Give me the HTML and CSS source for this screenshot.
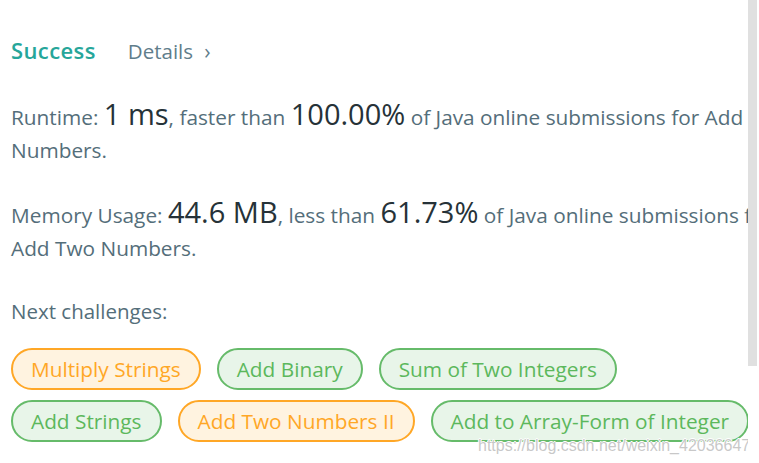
FILE: index.html
```html
<!DOCTYPE html>
<html>
<head>
<meta charset="utf-8">
<link rel="stylesheet" href="styles.css">
</head>
<body>
<div class="page">
  <div class="viewport">
    <div class="content">
      <div class="header">
        <span class="success">Success</span>
        <span class="details">Details <span class="chev">›</span></span>
      </div>
      <p class="stat">Runtime: <span class="big">1 ms</span>, faster than <span class="big">100.00%</span> of Java online submissions for Add Two Numbers.</p>
      <p class="stat">Memory Usage: <span class="big">44.6 MB</span>, less than <span class="big">61.73%</span> of Java online submissions for Add Two Numbers.</p>
      <p class="next">Next challenges:</p>
      <div class="chips">
        <span class="chip medium">Multiply Strings</span>
        <span class="chip easy">Add Binary</span>
        <span class="chip easy">Sum of Two Integers</span>
        <span class="chip easy">Add Strings</span>
        <span class="chip medium">Add Two Numbers II</span>
        <span class="chip easy">Add to Array-Form of Integer</span>
      </div>
    </div>
    <div class="watermark">https://blog.csdn.net/weixin_42036647</div>
  </div>
  <div class="scrolltrack"><div class="thumb"></div></div>
</div>
</body>
</html>
```

FILE: styles.css
```css
html, body {
  margin: 0;
  padding: 0;
  background: #fff;
}
body {
  font-family: "Open Sans", "Noto Sans", sans-serif;
  color: #546e7a;
}
.page {
  display: flex;
  width: 759px;
  height: 463px;
  overflow: hidden;
}
.viewport {
  position: relative;
  width: 748px;
  height: 463px;
  overflow: hidden;
  flex: none;
}
.content {
  width: 785px;
  padding: 30px 0 0 11px;
}
.header {
  display: flex;
  align-items: baseline;
  gap: 32px;
  height: 40px;
  line-height: 40px;
}
.success {
  color: #26a69a;
  font-weight: 600;
  font-size: 22px;
  letter-spacing: 0.4px;
}
.details {
  color: #607d8b;
  font-size: 20.5px;
}
.chev {
  margin-left: 6px;
  font-size: 21px;
}
.stat {
  margin: 31px 0 0;
  font-size: 20.8px;
  line-height: 33px;
}
.stat + .stat {
  margin-top: 32px;
}
.big {
  font-size: 29px;
  color: #263238;
  line-height: 20px;
}
.next {
  margin: 30px 0 0;
  font-size: 20.5px;
  line-height: 33px;
}
.chips {
  display: flex;
  flex-wrap: wrap;
  gap: 10px 16px;
  max-width: 762px;
  margin-top: 20px;
}
.chip {
  box-sizing: border-box;
  height: 42px;
  line-height: 38px;
  padding: 0 18px;
  border-radius: 21px;
  border: 2px solid;
  font-size: 20.8px;
  white-space: nowrap;
}
.chip.medium {
  color: #ffa726;
  border-color: #ffa726;
  background: #fff3e0;
}
.chip.easy {
  color: #5cb85c;
  border-color: #66bb6a;
  background: #e8f5e9;
}
.watermark {
  position: absolute;
  left: 478px;
  top: 437px;
  font-family: "Liberation Sans", Arial, sans-serif;
  font-size: 16px;
  color: rgba(190, 190, 190, 0.85);
  text-shadow: 1px 0 #fff, -1px 0 #fff, 0 1px #fff, 0 -1px #fff;
  white-space: nowrap;
}
.scrolltrack {
  width: 11px;
  flex: none;
}
.thumb {
  width: 9px;
  height: 366px;
  background: #e0e0e0;
}
```
